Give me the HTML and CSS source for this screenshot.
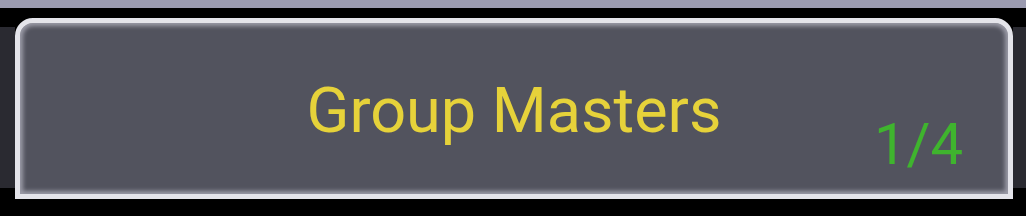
FILE: index.html
```html
<!DOCTYPE html>
<html>
<head>
<meta charset="utf-8">
<link rel="stylesheet" href="styles.css">
</head>
<body>
<div class="topstrip"></div>
<div class="row">
  <div class="side side-left"></div>
  <div class="button">
    <span class="title">Group Masters</span>
    <span class="count">1/4</span>
  </div>
  <div class="side side-right"></div>
</div>
</body>
</html>
```
FILE: styles.css
```css
html, body {
  margin: 0;
  padding: 0;
  background: #000;
  width: 1026px;
  height: 216px;
  overflow: hidden;
  font-family: Roboto, "Liberation Sans", sans-serif;
}
.topstrip {
  height: 8px;
  background: #9b9bb0;
}
.row {
  display: flex;
  margin-top: 10px;
  height: 181px;
}
.side {
  margin-top: 9px;
  height: 161px;
  background: #2a2a31;
}
.side-left { width: 15px; }
.side-right { flex: 1; }
.button {
  position: relative;
  width: 998px;
  box-sizing: border-box;
  height: 181px;
  border: 5px solid #e4e4ea;
  border-radius: 18px 18px 0 0;
  background: #52535e;
  box-shadow: inset 0 0 4px 3px #9c9ca8;
  display: flex;
  align-items: center;
  justify-content: center;
}
.title {
  color: #e6d23a;
  font-size: 63px;
  line-height: 1;
  margin-top: 4px;
}
.count {
  position: absolute;
  right: 45px;
  bottom: 21px;
  color: #3fb42e;
  font-size: 58px;
  line-height: 1;
}
```
